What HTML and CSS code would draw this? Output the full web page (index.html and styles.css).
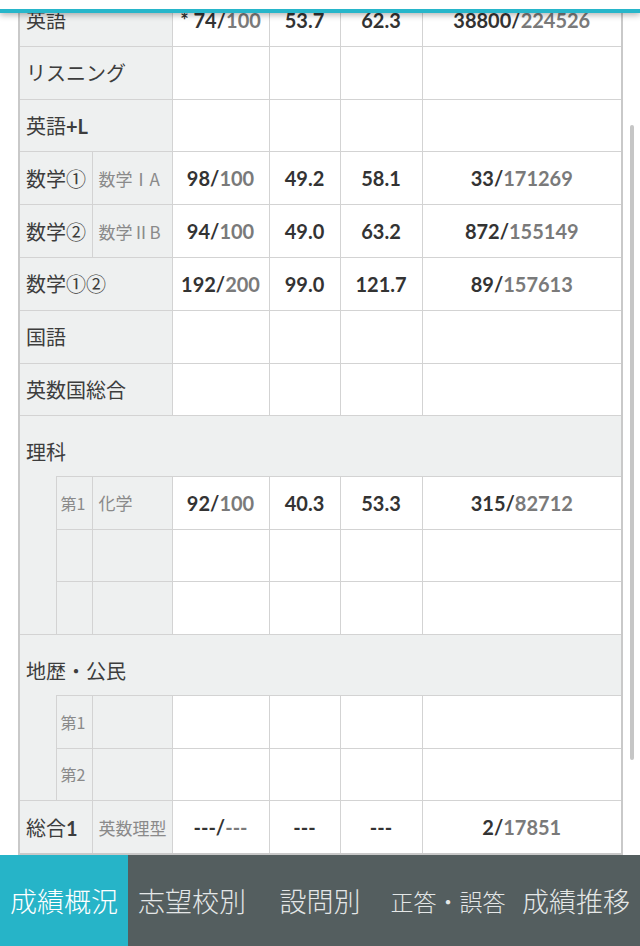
FILE: index.html
```html
<!DOCTYPE html>
<html lang="ja">
<head>
    <meta charset="UTF-8">
    <meta name="viewport" content="width=device-width, initial-scale=1.0">
    <title>成績概況</title>
    <link rel="stylesheet" href="styles.css">
</head>
<body>
    <header class="topbar"></header>

    <main class="content">
        <table class="scores">
            <colgroup>
                <col class="c-indent">
                <col class="c-no">
                <col class="c-sub">
                <col class="c-score">
                <col class="c-avg">
                <col class="c-avg2">
                <col class="c-rank">
            </colgroup>
            <tbody>
                <tr>
                    <th colspan="3">英語</th>
                    <td><span class="got">* 74/</span>100</td>
                    <td class="val">53.7</td>
                    <td class="val">62.3</td>
                    <td><span class="got">38800/</span>224526</td>
                </tr>
                <tr>
                    <th colspan="3">リスニング</th>
                    <td></td><td></td><td></td><td></td>
                </tr>
                <tr>
                    <th colspan="3">英語<span class="en">+L</span></th>
                    <td></td><td></td><td></td><td></td>
                </tr>
                <tr>
                    <th colspan="2">数学①</th>
                    <th class="sub">数学ⅠA</th>
                    <td><span class="got">98/</span>100</td>
                    <td class="val">49.2</td>
                    <td class="val">58.1</td>
                    <td><span class="got">33/</span>171269</td>
                </tr>
                <tr>
                    <th colspan="2">数学②</th>
                    <th class="sub">数学ⅡB</th>
                    <td><span class="got">94/</span>100</td>
                    <td class="val">49.0</td>
                    <td class="val">63.2</td>
                    <td><span class="got">872/</span>155149</td>
                </tr>
                <tr>
                    <th colspan="3">数学①②</th>
                    <td><span class="got">192/</span>200</td>
                    <td class="val">99.0</td>
                    <td class="val">121.7</td>
                    <td><span class="got">89/</span>157613</td>
                </tr>
                <tr>
                    <th colspan="3">国語</th>
                    <td></td><td></td><td></td><td></td>
                </tr>
                <tr>
                    <th colspan="3">英数国総合</th>
                    <td></td><td></td><td></td><td></td>
                </tr>

                <!-- 理科 -->
                <tr class="section">
                    <th colspan="7">理科</th>
                </tr>
                <tr>
                    <th class="indent" rowspan="3"></th>
                    <th class="no">第1</th>
                    <th class="sub">化学</th>
                    <td><span class="got">92/</span>100</td>
                    <td class="val">40.3</td>
                    <td class="val">53.3</td>
                    <td><span class="got">315/</span>82712</td>
                </tr>
                <tr>
                    <th class="no"></th>
                    <th class="sub"></th>
                    <td></td><td></td><td></td><td></td>
                </tr>
                <tr>
                    <th class="no"></th>
                    <th class="sub"></th>
                    <td></td><td></td><td></td><td></td>
                </tr>

                <!-- 地歴・公民 -->
                <tr class="section">
                    <th colspan="7">地歴・公民</th>
                </tr>
                <tr>
                    <th class="indent" rowspan="2"></th>
                    <th class="no">第1</th>
                    <th class="sub"></th>
                    <td></td><td></td><td></td><td></td>
                </tr>
                <tr>
                    <th class="no">第2</th>
                    <th class="sub"></th>
                    <td></td><td></td><td></td><td></td>
                </tr>

                <tr>
                    <th colspan="2">総合<span class="en">1</span></th>
                    <th class="sub">英数理型</th>
                    <td><span class="got">---/</span>---</td>
                    <td class="val">---</td>
                    <td class="val">---</td>
                    <td><span class="got">2/</span>17851</td>
                </tr>
            </tbody>
        </table>
    </main>

    <div class="scroll-thumb"></div>

    <nav class="tabs">
        <div class="tab active">成績概況</div>
        <div class="tab">志望校別</div>
        <div class="tab">設問別</div>
        <div class="tab small">正答・誤答</div>
        <div class="tab">成績推移</div>
    </nav>
</body>
</html>
```

FILE: styles.css
```css
body {
    margin: 0;
    padding: 0;
    font-family: Lato, "Noto Sans CJK JP", sans-serif;
    color: #333;
    background: #fff;
}
.topbar {
    position: fixed;
    top: 0;
    left: 0;
    right: 0;
    height: 9px;
    background: #fff;
    border-bottom: 4px solid #27b6ca;
    box-shadow: 0 2px 6px rgba(0, 0, 0, 0.3);
    z-index: 2;
}
.content {
    margin-top: -8px;
    padding: 0 18px;
}
.scores {
    width: 603px;
    border-collapse: collapse;
    table-layout: fixed;
    border: 2px solid #c9c9c9;
}
.c-indent { width: 37px; }
.c-no { width: 36px; }
.c-sub { width: 80px; }
.c-score { width: 97px; }
.c-avg { width: 71px; }
.c-avg2 { width: 82px; }
.c-rank { width: 200px; }

.scores th, .scores td {
    height: 51.8px;
    padding: 0;
    border: 1px solid #d3d3d3;
    font-size: 20px;
}
.scores th {
    padding-left: 6px;
    text-align: left;
    font-family: "Noto Sans CJK JP", sans-serif;
    font-weight: normal;
    color: #3d3d3d;
    background: #eef0f0;
    white-space: nowrap;
}
.scores td {
    text-align: center;
    font-weight: bold;
    color: #7a7a7a;
    background: #fff;
}
.scores td.val, .got {
    color: #333;
}
.en {
    font-family: Lato, sans-serif;
    font-weight: bold;
}
.scores th.sub {
    padding-left: 6px;
    font-size: 17px;
    color: #8a8a8a;
}
.scores th.no {
    padding-left: 4px;
    font-size: 16px;
    color: #8a8a8a;
}
.scores th.indent {
    border-top: none;
}
.section th {
    height: 46.5px;
    vertical-align: bottom;
    padding-bottom: 13px;
    border-bottom: none;
    line-height: 22px;
}

.scroll-thumb {
    position: fixed;
    top: 125px;
    right: 6px;
    width: 4px;
    height: 635px;
    border-radius: 2px;
    background: #c6c6c6;
}

.tabs {
    position: fixed;
    left: 0;
    right: 0;
    bottom: 0;
    height: 91px;
    display: flex;
    background: #545e5f;
    z-index: 2;
}
.tab {
    flex: 1;
    display: flex;
    align-items: center;
    justify-content: center;
    font-family: "Noto Sans CJK JP", sans-serif;
    font-size: 27px;
    font-weight: 300;
    color: #e4e7e7;
    white-space: nowrap;
}
.tab.active {
    background: #26b4c8;
    color: #fff;
}
.tab.small {
    font-size: 23px;
}
```
